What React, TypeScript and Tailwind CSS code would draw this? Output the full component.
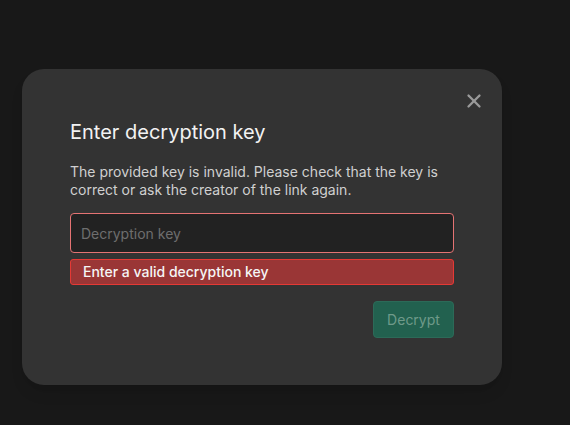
import { X } from 'lucide-react'

export default function App() {
  return (
    <div className="w-[570px] h-[425px] bg-[#181818] overflow-hidden font-['Inter',sans-serif]">
      <div className="pt-[69px] pl-[22px]">
        <div className="relative w-[480px] h-[316px] rounded-[22px] bg-[#333333] px-12 pt-[50px] shadow-lg">
          <button className="absolute right-[17px] top-[21px] text-[#9a9a9a]">
            <X size={22} strokeWidth={2.5} />
          </button>
          <h2 className="text-[20px] leading-[26px] text-[#f2f2f2]">Enter decryption key</h2>
          <p className="mt-[18px] text-[14px] leading-[18px] text-[#d0d0d0]">
            The provided key is invalid. Please check that the key is correct or ask the creator of the link again.
          </p>
          <input
            placeholder="Decryption key"
            className="mt-[14px] block w-full h-[40px] rounded-[4px] border border-[#e57373] bg-[#222222] px-[10px] text-[14px] text-[#ddd] placeholder:text-[#6e6e6e] outline-none"
          />
          <div className="mt-[6px] h-[26px] rounded-[3px] border border-[#e53935] bg-[#9a3636] px-3 text-[14px] font-medium leading-[24px] text-[#f5f5f5]">
            Enter a valid decryption key
          </div>
          <div className="mt-[16px] flex justify-end">
            <button className="h-[37px] w-[81px] rounded-[4px] border border-[#2c6a58] bg-[#22614f] text-[14px] text-[#6f9a8a]">
              Decrypt
            </button>
          </div>
        </div>
      </div>
    </div>
  )
}
